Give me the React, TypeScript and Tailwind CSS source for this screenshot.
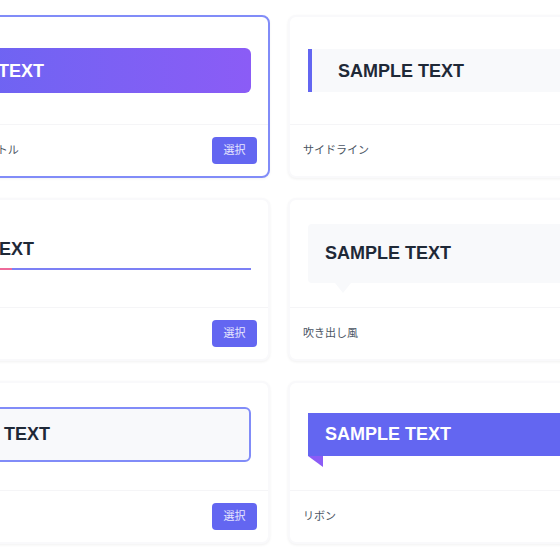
import type { ReactNode } from 'react';

type Style = {
  id: string;
  label: string;
  selected?: boolean;
  preview: ReactNode;
};

const text = 'SAMPLE TEXT';

const styles: Style[] = [
  {
    id: 'gradient',
    label: 'グラデーションタイトル',
    selected: true,
    preview: (
      <div className="w-full rounded-md bg-gradient-to-r from-[#6366f1] to-[#8b5cf6] pt-[10px] pb-2 pl-[15px] text-[18px] leading-[27px] font-bold text-white">
        {text}
      </div>
    ),
  },
  {
    id: 'sideline',
    label: 'サイドライン',
    preview: (
      <div className="w-full border-l-4 border-[#6366f1] bg-[#f8f9fb] pt-[9px] pb-[7px] pl-[26px] text-[18px] leading-[27px] font-bold text-[#1f2937]">
        {text}
      </div>
    ),
  },
  {
    id: 'underline',
    label: '下線アクセント',
    preview: (
      <div className="relative w-full border-b-2 border-[#7c80f5] pb-2 pl-[5px] text-[18px] leading-[22px] font-bold text-[#1f2937]">
        {text}
        <span className="absolute left-0 -bottom-[2px] h-[2px] w-[109px] bg-[#ee6a9a]" />
      </div>
    ),
  },
  {
    id: 'bubble',
    label: '吹き出し風',
    preview: (
      <div className="relative w-full rounded-sm bg-[#f8f9fb] px-[17px] py-4 text-[18px] leading-[27px] font-bold text-[#1f2937]">
        {text}
        <span className="absolute left-[27px] top-full h-0 w-0 border-x-8 border-t-[10px] border-x-transparent border-t-[#f8f9fb]" />
      </div>
    ),
  },
  {
    id: 'box',
    label: '枠線ボックス',
    preview: (
      <div className="-mt-1 w-full rounded-md border-2 border-[#818cf8] bg-[#f8f9fb] py-3 pl-[19px] text-[18px] leading-[27px] font-bold text-[#1f2937]">
        {text}
      </div>
    ),
  },
  {
    id: 'ribbon',
    label: 'リボン',
    preview: (
      <div className="relative -mt-1 w-full bg-[#6366f1] py-2 pl-[17px] text-[18px] leading-[27px] font-bold text-white">
        {text}
        <svg className="absolute left-0 top-full" width="15" height="11" viewBox="0 0 15 11">
          <polygon points="0,0 15,0 15,11" fill="#8b5cf6" />
        </svg>
      </div>
    ),
  },
];

function StyleCard({ item }: { item: Style }) {
  return (
    <div
      className={
        item.selected
          ? 'flex h-[163px] flex-col rounded-lg border-2 border-[#818cf8] bg-white shadow-[0_1px_3px_rgba(0,0,0,0.05)]'
          : 'flex h-[163px] flex-col rounded-lg border-2 border-[#f9f9fb] bg-white shadow-[0_1px_3px_rgba(0,0,0,0.06)]'
      }
    >
      {/* preview */}
      <div className="flex flex-1 items-center pl-[18px] pr-[17px]">{item.preview}</div>

      {/* footer */}
      <div className="flex h-[52px] items-center justify-between border-t border-[#f5f5f7] pl-[13px] pr-[11px]">
        <span className="text-[11px] text-[#4b5563]">{item.label}</span>
        <button className="h-[27px] w-[45px] rounded bg-[#6366f1] text-[11px] text-white/85">
          選択
        </button>
      </div>
    </div>
  );
}

export default function App() {
  return (
    <div
      className="flex w-full justify-center overflow-hidden bg-white pt-[15px] pb-3 pr-0.5"
      style={{ fontFamily: '"Liberation Sans", "Noto Sans CJK JP", sans-serif' }}
    >
      <div className="grid shrink-0 grid-cols-[387px_387px] gap-x-[18px] gap-y-5">
        {styles.map((s) => (
          <StyleCard key={s.id} item={s} />
        ))}
      </div>
    </div>
  );
}
